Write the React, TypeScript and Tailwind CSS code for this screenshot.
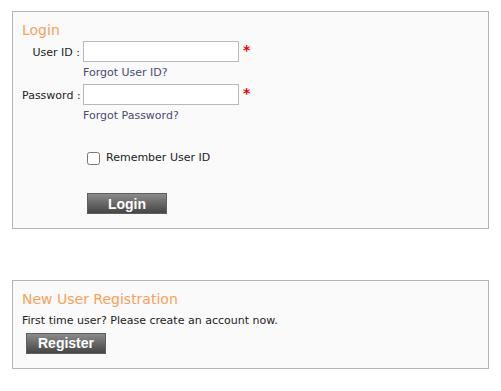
export default function App() {
  return (
    <div className="min-h-[391px] bg-white pt-[11px] pl-[12px] pr-[12px] font-['DejaVu_Sans',sans-serif] text-[11px] text-[#222]">
      <section className="w-[477px] h-[218px] border border-[#b4b4b4] bg-[#fafafa] px-[9px] pt-[10px]">
        <h2 className="text-[14px] leading-[16px] text-[#f8a15b]">Login</h2>
        <div className="mt-[3px] grid grid-cols-[58px_auto] gap-x-[3px]">
          <label className="whitespace-nowrap text-right leading-[21px] pt-[1px]">User ID :</label>
          <div className="flex items-start gap-[4px]">
            <input className="h-[21px] w-[156px] border border-[#b9b9b9] bg-white" />
            <span className="text-[#e00] text-[14px] leading-[18px] font-bold">*</span>
          </div>
          <div />
          <a className="mt-[3px] mb-[4px] leading-[14px] text-[#4a4a70]">Forgot User ID?</a>
          <label className="whitespace-nowrap text-right leading-[21px] pt-[1px]">Password :</label>
          <div className="flex items-start gap-[4px]">
            <input type="password" className="h-[21px] w-[156px] border border-[#b9b9b9] bg-white" />
            <span className="text-[#e00] text-[14px] leading-[18px] font-bold">*</span>
          </div>
          <div />
          <a className="mt-[3px] leading-[14px] text-[#4a4a70]">Forgot Password?</a>
        </div>
        <label className="mt-[27px] ml-[65px] flex items-center gap-[6px] leading-[16px]">
          <input type="checkbox" className="h-[13px] w-[13px]" />
          <span>Remember User ID</span>
        </label>
        <button className="mt-[27px] ml-[65px] h-[21px] w-[80px] border border-[#5e5e5e] bg-gradient-to-b from-[#8c8c8c] to-[#464646] font-['Liberation_Sans',sans-serif] text-[14px] leading-[18px] font-bold text-white">
          Login
        </button>
      </section>
      <section className="mt-[51px] w-[477px] h-[89px] border border-[#b4b4b4] bg-[#fafafa] px-[9px] pt-[10px]">
        <h2 className="text-[14px] leading-[16px] text-[#f8a15b]">New User Registration</h2>
        <p className="mt-[6px]">First time user? Please create an account now.</p>
        <button className="mt-[3px] ml-[4px] h-[21px] w-[80px] border border-[#5e5e5e] bg-gradient-to-b from-[#8c8c8c] to-[#464646] font-['Liberation_Sans',sans-serif] text-[14px] leading-[18px] font-bold text-white">
          Register
        </button>
      </section>
    </div>
  )
}
